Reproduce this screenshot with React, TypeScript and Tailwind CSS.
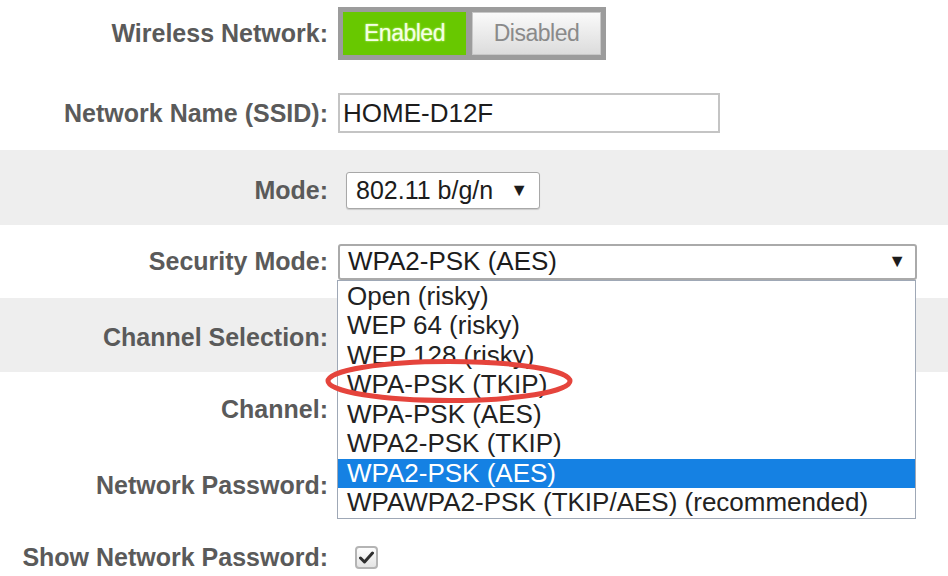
import React from 'react';

const options = [
  'Open (risky)',
  'WEP 64 (risky)',
  'WEP 128 (risky)',
  'WPA-PSK (TKIP)',
  'WPA-PSK (AES)',
  'WPA2-PSK (TKIP)',
  'WPA2-PSK (AES)',
  'WPAWPA2-PSK (TKIP/AES) (recommended)',
];

const Label: React.FC<{ text: string }> = ({ text }) => (
  <div className="w-[328px] shrink-0 text-right text-[25px] font-bold text-[#5a5a5a] leading-none">{text}</div>
);

const App: React.FC = () => {
  const selected = 'WPA2-PSK (AES)';

  return (
    <div
      className="w-[948px] h-[576px] overflow-hidden bg-white"
      style={{ fontFamily: '"Liberation Sans", Arial, sans-serif' }}
    >
      {/* Wireless Network */}
      <div className="flex items-center h-[66px]">
        <Label text="Wireless Network:" />
        <div className="ml-[10px] flex gap-[6px] bg-[#9c9c9c] p-[5px] w-[268px] h-[53px]">
          <button className="w-[123px] bg-[#68c800] text-[23px] text-[#f4ffe6] tracking-[-0.5px] [text-shadow:0_0_2px_#d8ff9a]">
            Enabled
          </button>
          <button className="flex-1 border border-[#c8c8c8] bg-gradient-to-b from-[#fafafa] to-[#dcdcdc] text-[23px] text-[#8a8a8a] tracking-[-0.5px]">
            Disabled
          </button>
        </div>
      </div>

      {/* SSID */}
      <div className="flex items-center h-[84px] pt-[10px]">
        <Label text="Network Name (SSID):" />
        <div className="ml-[10px] w-[382px] h-[40px] border-2 border-[#c4c4c4] bg-white flex items-center pl-[3px] text-[26px] text-[#1c1c1c]">
          HOME-D12F
        </div>
      </div>

      {/* Mode */}
      <div className="flex items-center h-[75px] pt-[6px] bg-[#eeeeee]">
        <Label text="Mode:" />
        <div className="ml-[18px] w-[194px] h-[37px] border border-[#a8a8a8] rounded-[3px] bg-white flex items-center justify-between pl-[9px] pr-[11px] text-[25px] text-[#1c1c1c] shadow-[0_1px_1px_rgba(0,0,0,0.15)]">
          <span>802.11 b/g/n</span>
          <span className="text-[18px]">▼</span>
        </div>
      </div>

      {/* Security Mode */}
      <div className="flex items-center h-[73px]">
        <Label text="Security Mode:" />
        <div className="relative ml-[10px] w-[579px] h-[36px] border-2 border-[#aaaaaa] rounded-[3px] bg-white flex items-center justify-between pl-[8px] pr-[9px] text-[26px] text-[#1c1c1c]">
          <span>{selected}</span>
          <span className="text-[18px]">▼</span>

          {/* open listbox */}
          <div className="absolute left-[-3px] top-[34px] z-10 w-[579px] border border-[#9fa8b6] bg-white pt-[1px]">
            {options.map((o) => (
              <div
                key={o}
                className={
                  o === selected
                    ? 'h-[29.5px] leading-[29.5px] pl-[9px] text-[26px] bg-[#1581e3] text-white'
                    : 'h-[29.5px] leading-[29.5px] pl-[9px] text-[26px] text-[#222222]'
                }
              >
                {o}
              </div>
            ))}
            <svg className="absolute left-[-13px] top-[77px]" width="250" height="46" viewBox="0 0 250 46">
              <ellipse cx="124" cy="23" rx="121" ry="19.5" fill="none" stroke="#e5443c" strokeWidth="5" />
            </svg>
          </div>
        </div>
      </div>

      {/* Channel Selection */}
      <div className="flex items-center h-[74px] pt-[4px] bg-[#eeeeee]">
        <Label text="Channel Selection:" />
      </div>

      {/* Channel */}
      <div className="flex items-center h-[74px]">
        <Label text="Channel:" />
      </div>

      {/* Network Password */}
      <div className="flex items-center h-[74px] pt-[4px]">
        <Label text="Network Password:" />
      </div>

      {/* Show Network Password */}
      <div className="flex items-center h-[74px]">
        <Label text="Show Network Password:" />
        <div className="ml-[27px] w-[23px] h-[23px] rounded-[4px] border-2 border-[#b4b4b4] bg-gradient-to-b from-[#fdfdfd] to-[#e4e4e4] flex items-center justify-center">
          <svg width="15" height="13" viewBox="0 0 15 13">
            <path d="M1.5 7 L5.5 11 L13.5 2" fill="none" stroke="#2e2e2e" strokeWidth="3" strokeLinecap="round" strokeLinejoin="round" />
          </svg>
        </div>
      </div>
    </div>
  );
};

export default App;
